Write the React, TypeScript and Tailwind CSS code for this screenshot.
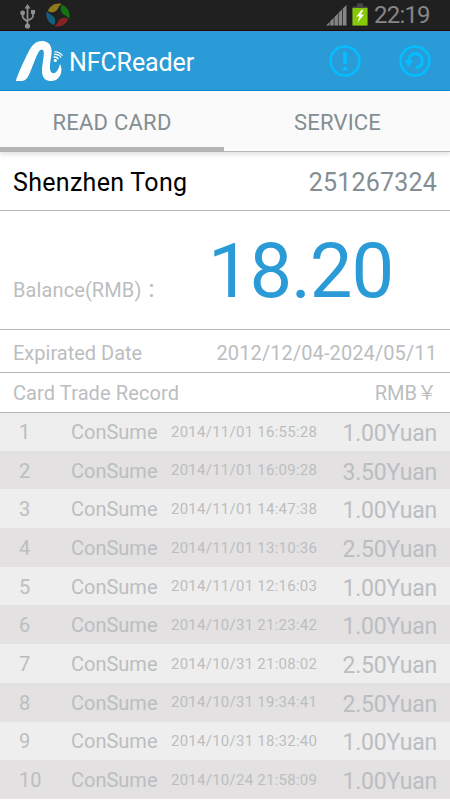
import React from "react";

const records = [
  ["1", "2014/11/01 16:55:28", "1.00Yuan"],
  ["2", "2014/11/01 16:09:28", "3.50Yuan"],
  ["3", "2014/11/01 14:47:38", "1.00Yuan"],
  ["4", "2014/11/01 13:10:36", "2.50Yuan"],
  ["5", "2014/11/01 12:16:03", "1.00Yuan"],
  ["6", "2014/10/31 21:23:42", "1.00Yuan"],
  ["7", "2014/10/31 21:08:02", "2.50Yuan"],
  ["8", "2014/10/31 19:34:41", "2.50Yuan"],
  ["9", "2014/10/31 18:32:40", "1.00Yuan"],
  ["10", "2014/10/24 21:58:09", "1.00Yuan"],
];

function UsbIcon() {
  return (
    <svg width="16" height="26" viewBox="0 0 16 26" fill="none" stroke="#8f8f8f" strokeWidth="1.7">
      <path d="M7.500 3v19M2.600 10v3.500q0 2 5 5M13 9v4q0 2.500-5.500 4.500" />
      <path d="M7.500 1L10.500 5.500h-6z" fill="#8f8f8f" stroke="none" />
      <circle cx="7.500" cy="23" r="2.600" fill="#8f8f8f" stroke="none" />
      <circle cx="2.600" cy="10" r="2.400" fill="#8f8f8f" stroke="none" />
      <path d="M11 7h4v4h-4z" fill="#8f8f8f" stroke="none" />
    </svg>
  );
}

function SwirlIcon() {
  const petal = "M2 7.500C4 3 8 .5 12.500 .4C14.500 .4 15.500 .8 16 1.500C13 2 13 4.500 11 7C8.500 10 3 10 2 7.500Z";
  return (
    <svg width="24" height="24" viewBox="0 0 24 24">
      <path d={petal} fill="#8b7c19" />
      <path d={petal} fill="#147414" transform="rotate(90 12 12)" />
      <path d={petal} fill="#842425" transform="rotate(180 12 12)" />
      <path d={petal} fill="#145f80" transform="rotate(270 12 12)" />
    </svg>
  );
}

function StatusIcons() {
  return (
    <svg width="44" height="26" viewBox="0 0 44 26" className="shrink-0">
      <path fill="#858585" d="M0 23.500l3.500-3.500v3.500zM4.200 19.300l3.500-3.500v7.700H4.200zM8.400 15l3.500-3.500v12H8.400zM12.600 10.800l3.500-3.500v16.200h-3.500zM16.800 6.600L20.500 2.900v20.600h-3.700z" />
      <path d="M31 1.500h6v3h4.500v19h-15v-19H31z" fill="#484848" />
      <path d="M26.500 6h15v17.500h-15z" fill="#85ca05" />
      <path d="M35.500 8l-5 6.500h3l-2 6 6.500-8h-3.500l3-4.500z" fill="#fff" />
    </svg>
  );
}

function Logo() {
  return (
    <svg width="48" height="42" viewBox="0 0 48 42" fill="#fff" className="shrink-0">
      <path d="M.7 41C3 34 7 25 10.500 18C14 10 17.500 4 22 2C26 .3 30 .6 32.500 2.500C36.500 5 37.300 10 36.200 16C35.300 22 34 28 36 32C40 36 43.500 30 45 24C49 32 44 40 38 40.700C31 42 27 38 27 31C27 25 29 17 28.800 12.500C28.500 8.500 25.500 8.500 23.300 12.500C20.500 18 18 25 16 30C13.500 37 11 41 6.700 41Z" />
      <circle cx="40.300" cy="20.500" r="1.600" />
      <g fill="none" stroke="#fff" strokeWidth="1.300">
        <path d="M38.500 17.200q3-.8 5 2M39 14.500q5-.5 7 3" />
        <path d="M39.500 11.900q5-.3 8 3.800" strokeWidth="1.100" />
      </g>
    </svg>
  );
}

function AlertIcon() {
  return (
    <svg width="32" height="32" viewBox="0 0 32 32" fill="none" stroke="#05bdff" strokeLinecap="round">
      <circle cx="16" cy="16" r="14.500" strokeWidth="2.500" />
      <path d="M16 8.500v8.500" strokeWidth="4" />
      <circle cx="16" cy="23.700" r="2.300" fill="#05bdff" stroke="none" />
    </svg>
  );
}

function RefreshIcon() {
  return (
    <svg width="32" height="32" viewBox="0 0 32 32" fill="none" stroke="#05bdff">
      <circle cx="16" cy="16" r="14.500" strokeWidth="2.500" />
      <path d="M9.700 16C10 6 23 6.500 23.300 15.500Q23.300 22 16.500 22.500" strokeWidth="3.200" />
      <path d="M5 15.500h9.500L9.800 22z" fill="#05bdff" stroke="none" />
    </svg>
  );
}

export default function App() {
  return (
    <div className="flex h-[800px] w-[450px] flex-col overflow-hidden whitespace-nowrap bg-white font-['Roboto','Noto_Sans_CJK_SC',sans-serif] font-normal text-[#bbbec0]">
      <div className="flex h-[31px] shrink-0 items-center border-b border-[#26060a] bg-[#202020] pl-5">
        <div className="pt-[2px]"><UsbIcon /></div>
        <div className="ml-[10px]"><SwirlIcon /></div>
        <div className="ml-auto"><StatusIcons /></div>
        <span className="ml-[4px] mr-[18px] w-[58px] pt-px text-[24px] leading-[29px] tracking-[-0.8px] text-[#868686]">22:19</span>
      </div>

      <header className="flex h-[60px] shrink-0 items-center border-b border-[#0791d5] bg-[#2a9bd6] pl-[15px] pr-[19px]">
        <Logo />
        <h1 className="ml-[6px] pt-[5px] text-[25px] leading-[30px] tracking-[-0.1px] text-white">NFCReader</h1>
        <div className="ml-auto flex gap-[38px]">
          <AlertIcon />
          <RefreshIcon />
        </div>
      </header>

      <nav className="z-10 grid h-[61px] shrink-0 grid-cols-2 border-b border-[#b8b8b8] bg-[#fafafa] text-center text-[22px] leading-[63px] text-[#838e93] shadow-[0_2px_5px_#0002]">
        <div className="-mb-px mr-px h-[61px] border-b-[5px] border-[#b4b4b4] tracking-[0.25px]">READ CARD</div>
        <div className="tracking-[0.2px]">SERVICE</div>
      </nav>

      <div className="flex h-[59px] shrink-0 items-center justify-between border-b border-[#b3b6b8] px-[13px] pt-[3px] text-[25px]">
        <span className="tracking-[0.3px] text-black">Shenzhen Tong</span>
        <span className="tracking-[0.2px] text-[#838e93]">251267324</span>
      </div>

      <div className="flex h-[119px] shrink-0 items-baseline border-b border-[#b3b6b8] px-[13px] pt-[15px]">
        <span className="w-[195px] text-[20px] tracking-[0.1px]">Balance(RMB)<span className="ml-[5px]">：</span></span>
        <span className="text-[76px] leading-[90px] tracking-[-1.2px] text-[#2a9bd6]">18.20</span>
      </div>

      <div className="flex h-[43px] shrink-0 items-center justify-between border-b border-[#b3b6b8] px-[13px] pt-[4px] text-[20px]">
        <span>Expirated Date</span>
        <span className="tracking-[0.1px]">2012/12/04-2024/05/11</span>
      </div>
      <div className="flex h-[40px] shrink-0 items-center justify-between border-b border-[#b3b6b8] px-[13px] text-[20px]">
        <span className="tracking-[0.1px]">Card Trade Record</span>
        <span>RMB￥</span>
      </div>

      <div className="flex flex-col">
        {records.map(([number, date, amount]) => (
          <div key={number} className="flex h-[38.7px] shrink-0 items-center bg-[#eee] pl-[19px] pr-[13px] pt-px first:h-[37.7px] first:pt-0 even:bg-[#e3e1e2]">
            <span className="w-[52px] text-[20px]">{number}</span>
            <span className="w-[100px] text-[20px]">ConSume</span>
            <span className="text-[15px] tracking-[0.25px]">{date}</span>
            <span className="ml-auto pt-[3px] text-[23px] leading-[27px] tracking-[-0.2px]">{amount}</span>
          </div>
        ))}
      </div>
    </div>
  );
}
